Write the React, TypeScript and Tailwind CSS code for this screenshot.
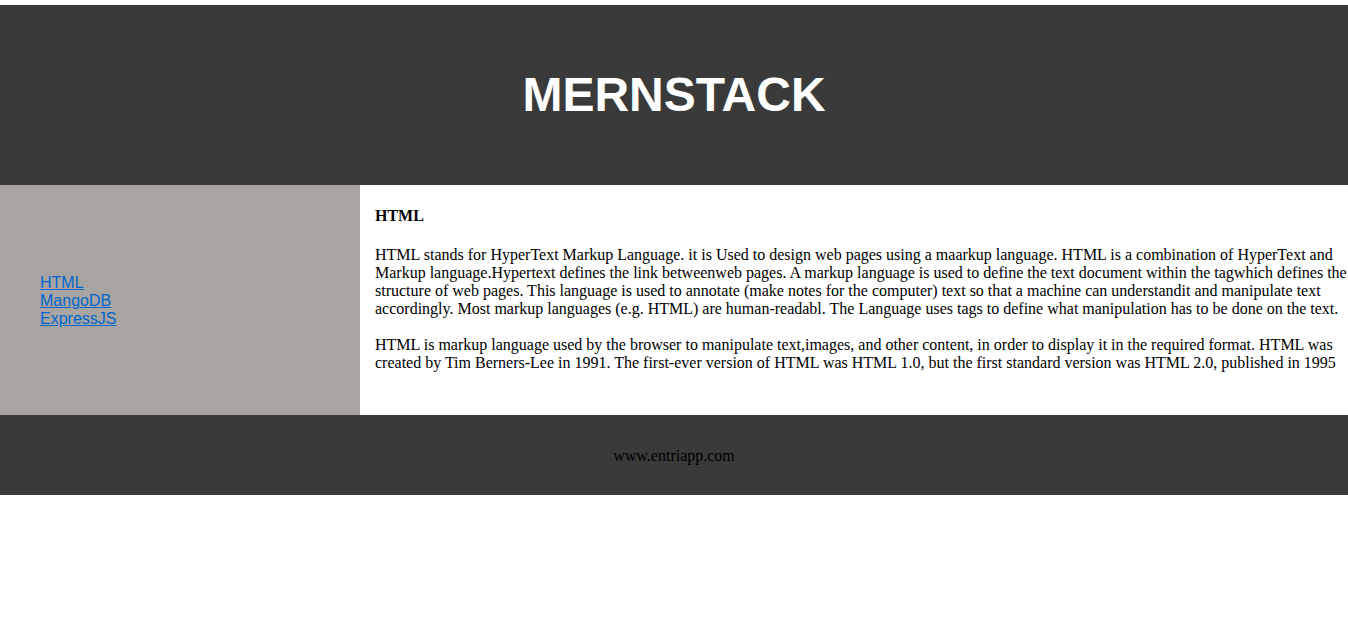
export default function App() {
  return (
    <div className="min-h-screen bg-white pt-[5px] font-['Liberation_Serif',serif] text-[16px] leading-[18px] text-black">
      <header className="flex h-[180px] items-center justify-center bg-[#3a3a3a]">
        <h1 className="font-['Liberation_Sans',sans-serif] text-[48px] leading-[56px] font-bold text-white">MERNSTACK</h1>
      </header>
      <div className="flex">
        <nav className="flex w-[360px] shrink-0 items-center bg-[#a8a4a2] px-10 pt-[2px]">
          <ul className="font-['Liberation_Sans',sans-serif] text-[#0066cc]">
            <li><a className="underline" href="#html">HTML</a></li>
            <li><a className="underline" href="#mangodb">MangoDB</a></li>
            <li><a className="underline" href="#expressjs">ExpressJS</a></li>
          </ul>
        </nav>
        <main id="html" className="min-h-[230px] min-w-0 flex-1 pt-[22px] pl-[15px]">
          <h2 className="mb-[21px] font-bold">HTML</h2>
          <p className="mb-[18px]">
            HTML stands for HyperText Markup Language. it is Used to design web pages using a maarkup language. HTML is a combination of HyperText and Markup language.Hypertext defines the link betweenweb pages. A markup language is used to define the text document within the tagwhich defines the structure of web pages. This language is used to annotate (make notes for the computer) text so that a machine can understandit and manipulate text accordingly. Most markup languages (e.g. HTML) are human-readabl. The Language uses tags to define what manipulation has to be done on the text.
          </p>
          <p>
            HTML is markup language used by the browser to manipulate text,images, and other content, in order to display it in the required format. HTML was created by Tim Berners-Lee in 1991. The first-ever version of HTML was HTML 1.0, but the first standard version was HTML 2.0, published in 1995
          </p>
        </main>
      </div>
      <footer className="flex h-20 items-center justify-center bg-[#3a3a3a] pt-[2px]">
        <p>www.entriapp.com</p>
      </footer>
    </div>
  );
}
